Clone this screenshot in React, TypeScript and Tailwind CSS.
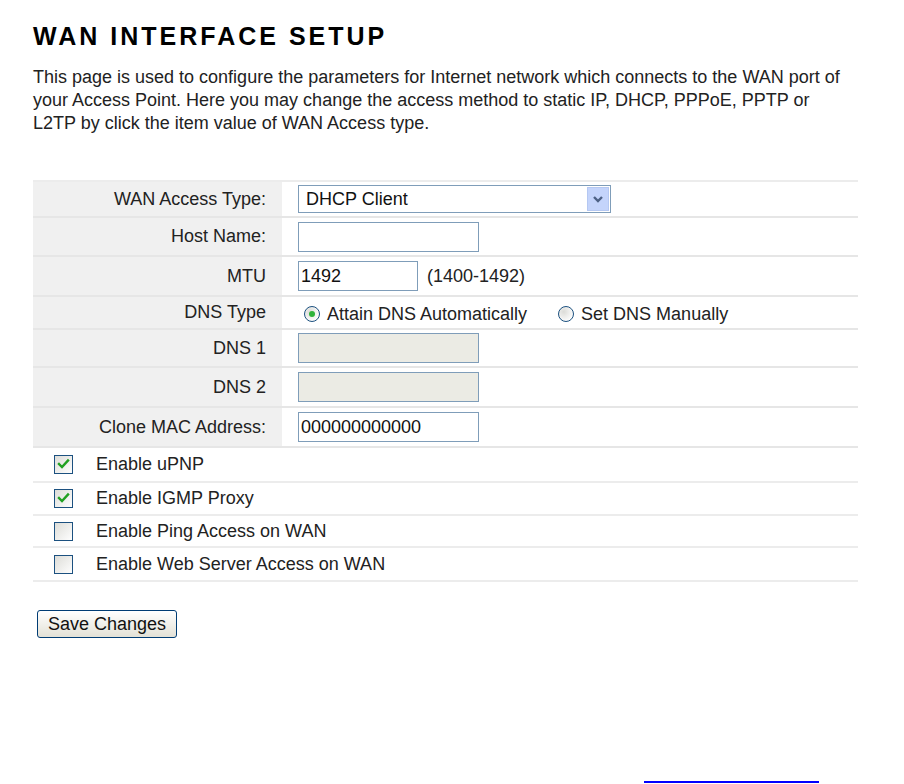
import type { ReactNode } from "react";

type FieldRow = {
  label: string;
  h: string;
  content: ReactNode;
};

function TextBox({ value = "", width, disabled = false }: { value?: string; width: string; disabled?: boolean }) {
  return (
    <div
      className={`flex h-[30px] items-center border border-[#7f9db9] px-[2px] text-[18px] text-[#111] ${width} ${
        disabled ? "bg-[#ebebe4]" : "bg-white"
      }`}
    >
      {value}
    </div>
  );
}

function Radio({ checked }: { checked: boolean }) {
  return (
    <svg width="18" height="18" viewBox="0 0 18 18" className="shrink-0">
      <defs>
        <radialGradient id={checked ? "rg1" : "rg2"} cx="0.35" cy="0.35" r="0.7">
          <stop offset="0" stopColor="#dcdcd8" />
          <stop offset="1" stopColor="#ffffff" />
        </radialGradient>
      </defs>
      <circle cx="9" cy="9" r="7.5" fill={`url(#${checked ? "rg1" : "rg2"})`} stroke="#1c5180" strokeWidth="1" />
      {checked ? <circle cx="9" cy="9" r="3" fill="#2fb33a" /> : null}
    </svg>
  );
}

function Check({ checked }: { checked: boolean }) {
  return (
    <svg width="19" height="19" viewBox="0 0 19 19" className="shrink-0">
      <defs>
        <linearGradient id="cbg" x1="0" y1="0" x2="1" y2="1">
          <stop offset="0" stopColor="#dcdcd7" />
          <stop offset="1" stopColor="#ffffff" />
        </linearGradient>
      </defs>
      <rect x="0.5" y="0.5" width="18" height="18" fill="url(#cbg)" stroke="#1c5180" />
      {checked ? (
        <path d="M5 9 L8 12 L14 5.5" fill="none" stroke="#21a121" strokeWidth="2.4" strokeLinecap="square" />
      ) : null}
    </svg>
  );
}

export default function App() {
  const rows: FieldRow[] = [
    {
      label: "WAN Access Type:",
      h: "h-[34px]",
      content: (
        <div className="flex h-[28px] w-[313px] items-center justify-between border border-[#7f9db9] bg-white pl-[7px] pr-[1px] text-[18px] text-[#111]">
          <span>DHCP Client</span>
          <span className="flex h-[24px] w-[22px] items-center justify-center border border-[#b5c8f2] bg-[#c4d4fb]">
            <svg width="12" height="8" viewBox="0 0 12 8">
              <path d="M2 2 L6 6 L10 2" fill="none" stroke="#4d6185" strokeWidth="2.4" />
            </svg>
          </span>
        </div>
      ),
    },
    { label: "Host Name:", h: "h-[37px]", content: <TextBox width="w-[181px]" /> },
    {
      label: "MTU",
      h: "h-[38px]",
      content: (
        <div className="flex items-center gap-[9px]">
          <TextBox value="1492" width="w-[120px]" />
          <span>(1400-1492)</span>
        </div>
      ),
    },
    {
      label: "DNS Type",
      h: "h-[31px]",
      content: (
        <div className="flex items-center pl-[5px] pt-[3px]">
          <Radio checked />
          <span className="ml-[6px]">Attain DNS Automatically</span>
          <span className="ml-[30px]">
            <Radio checked={false} />
          </span>
          <span className="ml-[6px]">Set DNS Manually</span>
        </div>
      ),
    },
    { label: "DNS 1", h: "h-[36px]", content: <TextBox width="w-[181px]" disabled /> },
    { label: "DNS 2", h: "h-[38px]", content: <TextBox width="w-[181px]" disabled /> },
    { label: "Clone MAC Address:", h: "h-[38px]", content: <TextBox value="000000000000" width="w-[181px]" /> },
  ];

  const checks = [
    { label: "Enable uPNP", checked: true, h: "h-[35px]" },
    { label: "Enable IGMP Proxy", checked: true, h: "h-[33px]" },
    { label: "Enable Ping Access on WAN", checked: false, h: "h-[32px]" },
    { label: "Enable Web Server Access on WAN", checked: false, h: "h-[34px]" },
  ];

  return (
    <div className="min-h-[784px] bg-white pl-[33px] pt-[21px] font-['Liberation_Sans',Arial,sans-serif] text-[18px] text-[#222]">
      <h1 className="text-[25px] font-bold leading-[30px] tracking-[3px] text-black">WAN INTERFACE SETUP</h1>

      <p className="mt-[15px] w-[820px] leading-[23px]">
        This page is used to configure the parameters for Internet network which connects to the WAN port of your
        Access Point. Here you may change the access method to static IP, DHCP, PPPoE, PPTP or L2TP by click the item
        value of WAN Access type.
      </p>

      <div className="mt-[45px] w-[825px] border-t-2 border-[#ececec]">
        {rows.map((row) => (
          <div key={row.label} className="flex border-b-2 border-[#e6e6e6]">
            <div className={`flex w-[249px] items-center justify-end bg-[#f0f0f0] pr-[16px] ${row.h}`}>
              {row.label}
            </div>
            <div className={`flex flex-1 items-center pl-[16px] ${row.h}`}>{row.content}</div>
          </div>
        ))}
        {checks.map((c) => (
          <div key={c.label} className={`flex items-center border-b-2 border-[#ececec] ${c.h}`}>
            <span className="ml-[21px]">
              <Check checked={c.checked} />
            </span>
            <span className="ml-[23px]">{c.label}</span>
          </div>
        ))}
      </div>

      <button
        type="button"
        className="mt-[28px] ml-[4px] h-[28px] rounded-[3px] border border-[#003c74] bg-gradient-to-b from-white to-[#e3e1d6] px-[10px] text-[18px] leading-none text-[#111]"
      >
        Save Changes
      </button>

      <div className="ml-[611px] mt-[143px] h-[2px] w-[175px] bg-[#0000ff]" />
    </div>
  );
}
